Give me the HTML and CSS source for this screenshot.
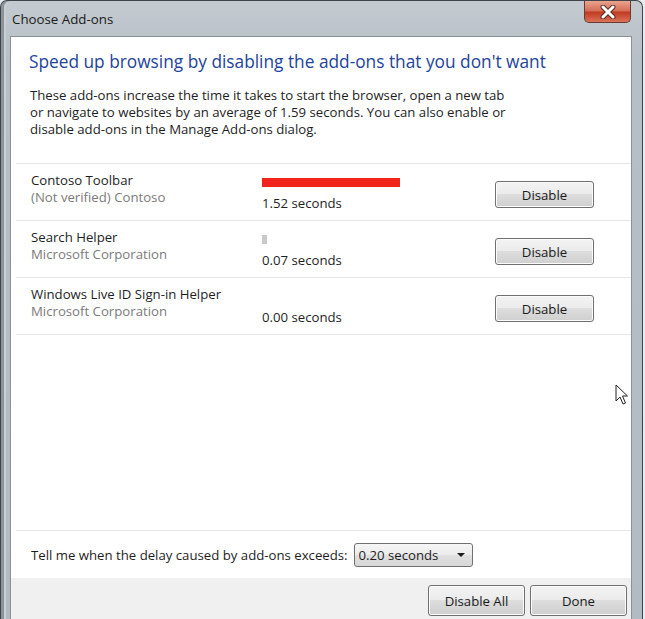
FILE: index.html
```html
<!DOCTYPE html>
<html lang="en">
<head>
  <meta charset="UTF-8">
  <title>Choose Add-ons</title>
  <link rel="stylesheet" href="styles.css">
</head>
<body>
  <div class="window">
    <div class="titlebar">
      <span class="title">Choose Add-ons</span>
      <div class="close">
        <svg width="18" height="14" viewBox="0 0 18 14">
          <path d="M4 2 L14 12 M14 2 L4 12" stroke="#5a2a20" stroke-width="5" stroke-linecap="round"/>
          <path d="M4 2 L14 12 M14 2 L4 12" stroke="#ffffff" stroke-width="3" stroke-linecap="round"/>
        </svg>
      </div>
    </div>
    <div class="client">
      <div class="main">
        <h1>Speed up browsing by disabling the add-ons that you don't want</h1>
        <p class="intro">These add-ons increase the time it takes to start the browser, open a new tab or navigate to websites by an average of 1.59 seconds. You can also enable or disable add-ons in the Manage Add-ons dialog.</p>
        <ul class="addons">
          <li class="addon">
            <div class="addon-info">
              <div class="name">Contoso Toolbar</div>
              <div class="publisher">(Not verified) Contoso</div>
            </div>
            <div class="addon-time">
              <div class="bar"><span class="fill red" style="width: 138px"></span></div>
              <div class="secs">1.52 seconds</div>
            </div>
            <button class="btn">Disable</button>
          </li>
          <li class="addon">
            <div class="addon-info">
              <div class="name">Search Helper</div>
              <div class="publisher">Microsoft Corporation</div>
            </div>
            <div class="addon-time">
              <div class="bar"><span class="fill gray" style="width: 5px"></span></div>
              <div class="secs">0.07 seconds</div>
            </div>
            <button class="btn">Disable</button>
          </li>
          <li class="addon">
            <div class="addon-info">
              <div class="name">Windows Live ID Sign-in Helper</div>
              <div class="publisher">Microsoft Corporation</div>
            </div>
            <div class="addon-time">
              <div class="bar"></div>
              <div class="secs">0.00 seconds</div>
            </div>
            <button class="btn">Disable</button>
          </li>
        </ul>
        <div class="spacer"></div>
        <div class="threshold">
          <span class="label">Tell me when the delay caused by add-ons exceeds:</span>
          <div class="select">
            <span>0.20 seconds</span>
            <span class="arrow"></span>
          </div>
        </div>
      </div>
      <div class="footer">
        <button class="btn wide">Disable All</button>
        <button class="btn wide">Done</button>
      </div>
    </div>
    <svg class="cursor" width="14" height="22" viewBox="0 0 14 22">
      <path d="M1 1 L1 17 L5 13 L8 20 L10.5 19 L7.5 12 L12.5 12 Z" fill="#ffffff" stroke="#222" stroke-width="1" stroke-linejoin="round"/>
    </svg>
  </div>
</body>
</html>
```

FILE: styles.css
```css
body {
  margin: 0;
  background-color: #e9ecee;
  font-family: 'Open Sans', 'Noto Sans', sans-serif;
  font-size: 13.2px;
  color: #1e1e1e;
}
.window {
  position: relative;
  width: 643px;
  height: 619px;
  box-sizing: border-box;
  display: flex;
  flex-direction: column;
  padding: 0 10px 0 9px;
  background: linear-gradient(#c3cad0, #b7bfc6 60px, #b3bbc2);
  border: 1px solid #3e4449;
  border-bottom: none;
  border-radius: 7px 7px 0 0;
  box-shadow: inset 3px 0 #8c949a, inset 5px 0 #c9d0d5;
}
.titlebar {
  height: 35px;
  display: flex;
  align-items: flex-start;
  justify-content: space-between;
}
.title {
  margin: 9px 0 0 2px;
  font-size: 13.3px;
  color: #1a1a1a;
}
.close {
  width: 45px;
  height: 21px;
  margin-right: 1px;
  display: flex;
  align-items: center;
  justify-content: center;
  border: 1px solid #6b3a30;
  border-top: none;
  border-radius: 0 0 5px 5px;
  background: linear-gradient(#eaa48f, #d5705a 45%, #c13c22 55%, #d9735a);
}
.client {
  flex: 1;
  display: flex;
  flex-direction: column;
  background-color: #fff;
  border: 1px solid #8a9298;
  border-bottom: none;
}
.main {
  flex: 1;
  display: flex;
  flex-direction: column;
}
h1 {
  margin: 14px 0 0 18px;
  font-size: 17.3px;
  font-weight: normal;
  line-height: 22px;
  color: #22449a;
}
.intro {
  margin: 14px 0 0 19px;
  width: 482px;
  line-height: 17px;
}
.addons {
  list-style-type: none;
  margin: 25px 0 0 5px;
  padding: 0;
  border-top: 1px solid #e6e6e6;
}
.addon {
  height: 56px;
  display: grid;
  grid-template-columns: 231px 233px 99px;
  align-items: start;
  padding-left: 15px;
  border-bottom: 1px solid #e6e6e6;
}
.addon-info {
  padding-top: 8px;
  line-height: 17px;
}
.publisher {
  color: #7b7b7b;
}
.addon-time {
  padding-top: 14px;
}
.bar {
  height: 9px;
}
.fill {
  display: block;
  height: 9px;
}
.fill.red {
  background-color: #f0241a;
}
.fill.gray {
  background-color: #c9c9c9;
}
.secs {
  margin-top: 8px;
  line-height: 17px;
}
.btn {
  font-family: inherit;
  font-size: 13.2px;
  color: #1a1a1a;
  height: 27px;
  margin-top: 17px;
  padding: 0;
  border: 1px solid #707070;
  border-radius: 3px;
  background: linear-gradient(#f3f3f3, #ebebeb 50%, #dddddd 50%, #cfcfcf);
  box-shadow: inset 0 0 0 1px #fcfcfc;
}
.spacer {
  flex: 1;
}
.threshold {
  height: 47px;
  margin-left: 5px;
  padding-left: 15px;
  display: flex;
  align-items: center;
  gap: 6px;
  border-top: 1px solid #e6e6e6;
}
.select {
  width: 119px;
  height: 24px;
  box-sizing: border-box;
  display: flex;
  align-items: center;
  justify-content: space-between;
  padding: 0 7px 0 4px;
  border: 1px solid #707070;
  border-radius: 3px;
  background: linear-gradient(#f6f6f6, #ebebeb 50%, #e0e0e0 50%, #d8d8d8);
}
.arrow {
  width: 0;
  height: 0;
  border-left: 4px solid transparent;
  border-right: 4px solid transparent;
  border-top: 4px solid #1a1a1a;
}
.footer {
  height: 41px;
  display: flex;
  justify-content: flex-end;
  align-items: flex-start;
  gap: 5px;
  padding-right: 4px;
  background-color: #f0f0f0;
}
.footer .btn {
  width: 97px;
  height: 31px;
  margin-top: 7px;
}
.cursor {
  position: absolute;
  left: 614px;
  top: 383px;
}
```
